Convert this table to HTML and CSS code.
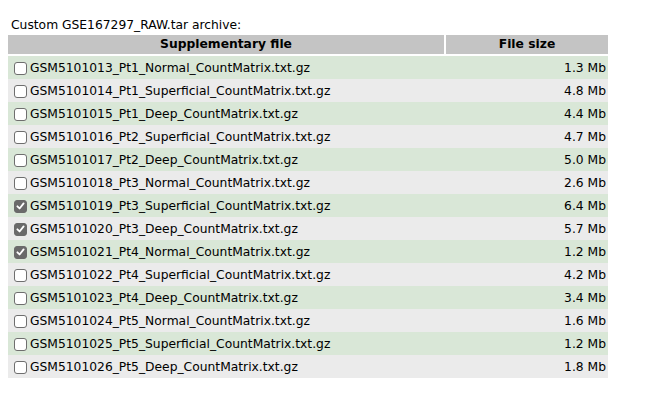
FILE: index.html
```html
<!DOCTYPE html>
<html>
<head>
<meta charset="utf-8">
<link rel="stylesheet" href="styles.css">
</head>
<body>
<div class="caption">Custom GSE167297_RAW.tar archive:</div>
<div class="table">
  <div class="head">
    <div class="th th-file">Supplementary file</div>
    <div class="th th-size">File size</div>
  </div>
  <div class="row green"><span class="cb"></span><span class="name">GSM5101013_Pt1_Normal_CountMatrix.txt.gz</span><span class="size">1.3 Mb</span></div>
  <div class="row gray"><span class="cb"></span><span class="name">GSM5101014_Pt1_Superficial_CountMatrix.txt.gz</span><span class="size">4.8 Mb</span></div>
  <div class="row green"><span class="cb"></span><span class="name">GSM5101015_Pt1_Deep_CountMatrix.txt.gz</span><span class="size">4.4 Mb</span></div>
  <div class="row gray"><span class="cb"></span><span class="name">GSM5101016_Pt2_Superficial_CountMatrix.txt.gz</span><span class="size">4.7 Mb</span></div>
  <div class="row green"><span class="cb"></span><span class="name">GSM5101017_Pt2_Deep_CountMatrix.txt.gz</span><span class="size">5.0 Mb</span></div>
  <div class="row gray"><span class="cb"></span><span class="name">GSM5101018_Pt3_Normal_CountMatrix.txt.gz</span><span class="size">2.6 Mb</span></div>
  <div class="row green"><span class="cb checked"><svg viewBox="0 0 12 12" width="12" height="12"><path d="M2.6 6.3 L5 8.7 L9.4 3.2" fill="none" stroke="#fff" stroke-width="2" stroke-linecap="round" stroke-linejoin="round"/></svg></span><span class="name">GSM5101019_Pt3_Superficial_CountMatrix.txt.gz</span><span class="size">6.4 Mb</span></div>
  <div class="row gray"><span class="cb checked"><svg viewBox="0 0 12 12" width="12" height="12"><path d="M2.6 6.3 L5 8.7 L9.4 3.2" fill="none" stroke="#fff" stroke-width="2" stroke-linecap="round" stroke-linejoin="round"/></svg></span><span class="name">GSM5101020_Pt3_Deep_CountMatrix.txt.gz</span><span class="size">5.7 Mb</span></div>
  <div class="row green"><span class="cb checked"><svg viewBox="0 0 12 12" width="12" height="12"><path d="M2.6 6.3 L5 8.7 L9.4 3.2" fill="none" stroke="#fff" stroke-width="2" stroke-linecap="round" stroke-linejoin="round"/></svg></span><span class="name">GSM5101021_Pt4_Normal_CountMatrix.txt.gz</span><span class="size">1.2 Mb</span></div>
  <div class="row gray"><span class="cb"></span><span class="name">GSM5101022_Pt4_Superficial_CountMatrix.txt.gz</span><span class="size">4.2 Mb</span></div>
  <div class="row green"><span class="cb"></span><span class="name">GSM5101023_Pt4_Deep_CountMatrix.txt.gz</span><span class="size">3.4 Mb</span></div>
  <div class="row gray"><span class="cb"></span><span class="name">GSM5101024_Pt5_Normal_CountMatrix.txt.gz</span><span class="size">1.6 Mb</span></div>
  <div class="row green"><span class="cb"></span><span class="name">GSM5101025_Pt5_Superficial_CountMatrix.txt.gz</span><span class="size">1.2 Mb</span></div>
  <div class="row gray"><span class="cb"></span><span class="name">GSM5101026_Pt5_Deep_CountMatrix.txt.gz</span><span class="size">1.8 Mb</span></div>
</div>
</body>
</html>
```
FILE: styles.css
```css
html, body { margin: 0; padding: 0; background: #fff; }
body {
  padding: 16px 0 0 8px;
  font-family: "DejaVu Sans", Verdana, sans-serif;
  font-size: 12.3px;
  color: #000;
}
.caption {
  padding-left: 3px;
  height: 19px;
  line-height: 19px;
}
.table { width: 600px; }
.head {
  display: flex;
  gap: 2px;
  margin-bottom: 2px;
}
.th {
  background: #c4c4c4;
  height: 19px;
  line-height: 19px;
  font-weight: bold;
  text-align: center;
}
.th-file { width: 436px; }
.th-size { flex: 1; }
.row {
  display: flex;
  align-items: center;
  height: 23px;
  padding-top: 1px;
  box-sizing: border-box;
}
.green { background: #d9e7d7; }
.gray { background: #ebebeb; }
.cb {
  width: 11px;
  height: 11px;
  margin: 0 4px 0 6px;
  border: 1px solid #6e6e6e;
  border-radius: 3px;
  background: #fff;
  flex: none;
  display: flex;
  align-items: center;
  justify-content: center;
  box-sizing: content-box;
}
.cb.checked {
  background: #6a6a6a;
  border-color: #6a6a6a;
}
.cb svg { display: block; }
.name { flex: 1; margin-left: -1px; }
.size { padding-right: 2px; }
```
